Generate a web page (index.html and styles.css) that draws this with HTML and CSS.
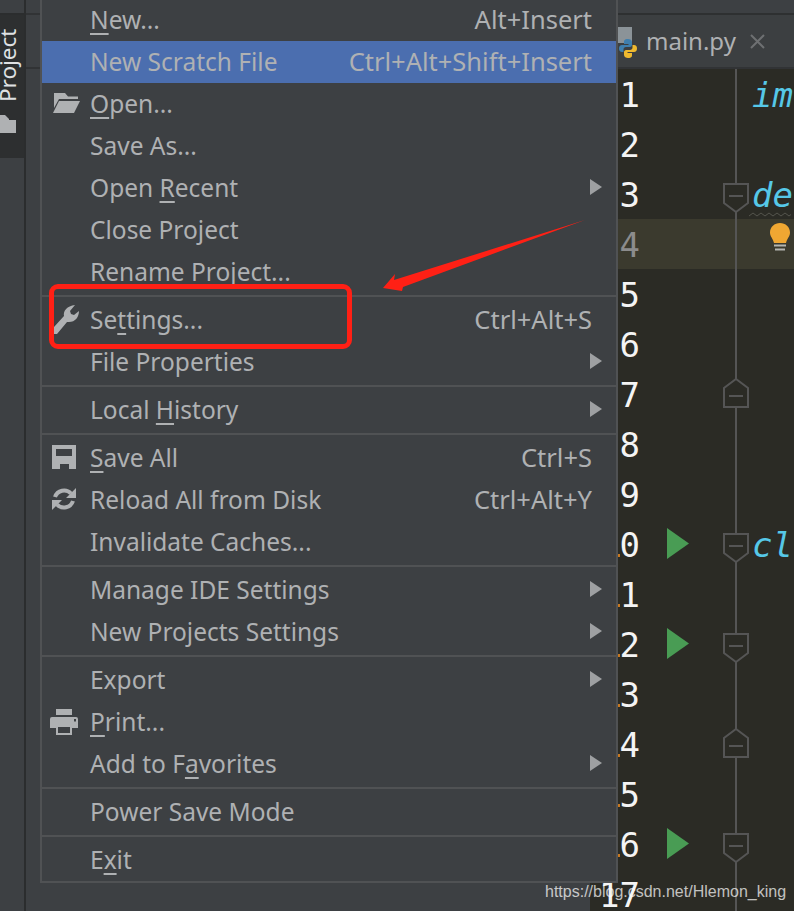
FILE: index.html
```html
<!DOCTYPE html>
<html lang="en">
<head>
<meta charset="utf-8">
<title>File menu</title>
<link rel="stylesheet" href="styles.css">
</head>
<body>
<div class="window">
  <aside class="stripe">
    <div class="stripe-tab">
      <span class="stripe-label">Project</span>
      <svg class="stripe-folder" width="17" height="18" viewBox="0 0 17 18"><path d="M0 0H5L9 4V5H16V18H0Z" fill="#afb1b3"/></svg>
    </div>
  </aside>
  <div class="panel"><div class="panel-head"></div></div>
  <main class="editor">
    <div class="tabbar">
      <div class="tab">
        <svg class="py" width="22" height="31" viewBox="0 0 22 31">
          <rect x="0" y="0" width="15" height="16" fill="#8b9398"/>
          <g transform="translate(2 12)">
            <path d="M9 0C5 0 5 2 5 3V5H9.5V6H3C1 6 0 7.5 0 9.5C0 11.5 1 13 3 13H4.5V10.5C4.5 9 5.5 8 7 8H11C12 8 13 7 13 6V3C13 1 11 0 9 0Z" fill="#3f7fae"/>
            <path d="M9 0C5 0 5 2 5 3V5H9.5V6H3C1 6 0 7.5 0 9.5C0 11.5 1 13 3 13H4.5V10.5C4.5 9 5.5 8 7 8H11C12 8 13 7 13 6V3C13 1 11 0 9 0Z" fill="#eeb92f" transform="rotate(180 9 9.5)"/>
          </g>
        </svg>
        <span class="tab-name">main.py</span>
        <svg class="tab-close" width="15" height="15" viewBox="0 0 15 15"><path d="M1 1L14 14M14 1L1 14" stroke="#6e7072" stroke-width="2"/></svg>
      </div>
    </div>
    <div class="code">
      <div class="line"><span class="num">1</span><span class="run"></span><span class="fold"></span><span class="txt">im</span></div>
      <div class="line"><span class="num">2</span><span class="run"></span><span class="fold"></span><span class="txt"></span></div>
      <div class="line"><span class="num">3</span><span class="run"></span><span class="fold"><svg class="mark-down" width="26" height="30" viewBox="0 0 26 30"><path d="M1 1H25V20L13 29L1 20Z" fill="#2b2b25" stroke="#555" stroke-width="2"/><path d="M6 13H20" stroke="#555" stroke-width="2"/></svg></span><span class="txt">de<svg class="squiggle" width="42" height="5" viewBox="0 0 42 5"><path d="M0 4L4 1L8 4L12 1L16 4L20 1L24 4L28 1L32 4L36 1L40 4L44 1" fill="none" stroke="#55554d" stroke-width="1"/></svg></span></div>
      <div class="line current"><span class="num">4</span><span class="run"></span><span class="fold"></span><span class="txt"><svg class="bulb" width="20" height="28" viewBox="0 0 20 28"><path d="M10 0C4.500 0 0 4 0 9.500C0 13.500 3 15.500 4 20H16C17 15.500 20 13.500 20 9.500C20 4 15.500 0 10 0Z" fill="#f0a732"/><path d="M4 22.500H16" stroke="#b5b5b0" stroke-width="2"/><path d="M5 26.500H15" stroke="#b5b5b0" stroke-width="2"/></svg></span></div>
      <div class="line"><span class="num">5</span><span class="run"></span><span class="fold"></span><span class="txt"></span></div>
      <div class="line"><span class="num">6</span><span class="run"></span><span class="fold"></span><span class="txt"></span></div>
      <div class="line"><span class="num">7</span><span class="run"></span><span class="fold"><svg class="mark-up" width="26" height="30" viewBox="0 0 26 30"><path d="M1 29H25V10L13 1L1 10Z" fill="#2b2b25" stroke="#555" stroke-width="2"/><path d="M6 18H20" stroke="#555" stroke-width="2"/></svg></span><span class="txt"></span></div>
      <div class="line"><span class="num">8</span><span class="run"></span><span class="fold"></span><span class="txt"></span></div>
      <div class="line"><span class="num">9</span><span class="run"></span><span class="fold"></span><span class="txt"></span></div>
      <div class="line tick"><span class="num">10</span><span class="run"><svg class="play" width="22" height="31" viewBox="0 0 22 31"><path d="M0 0L22 15.500L0 31Z" fill="#499c54"/></svg></span><span class="fold"><svg class="mark-down" width="26" height="30" viewBox="0 0 26 30"><path d="M1 1H25V20L13 29L1 20Z" fill="#2b2b25" stroke="#555" stroke-width="2"/><path d="M6 13H20" stroke="#555" stroke-width="2"/></svg></span><span class="txt">cl</span></div>
      <div class="line tick"><span class="num">11</span><span class="run"></span><span class="fold"></span><span class="txt"></span></div>
      <div class="line tick"><span class="num">12</span><span class="run"><svg class="play" width="22" height="31" viewBox="0 0 22 31"><path d="M0 0L22 15.500L0 31Z" fill="#499c54"/></svg></span><span class="fold"><svg class="mark-down" width="26" height="30" viewBox="0 0 26 30"><path d="M1 1H25V20L13 29L1 20Z" fill="#2b2b25" stroke="#555" stroke-width="2"/><path d="M6 13H20" stroke="#555" stroke-width="2"/></svg></span><span class="txt"></span></div>
      <div class="line tick"><span class="num">13</span><span class="run"></span><span class="fold"></span><span class="txt"></span></div>
      <div class="line tick"><span class="num">14</span><span class="run"></span><span class="fold"><svg class="mark-up" width="26" height="30" viewBox="0 0 26 30"><path d="M1 29H25V10L13 1L1 10Z" fill="#2b2b25" stroke="#555" stroke-width="2"/><path d="M6 18H20" stroke="#555" stroke-width="2"/></svg></span><span class="txt"></span></div>
      <div class="line tick"><span class="num">15</span><span class="run"></span><span class="fold"></span><span class="txt"></span></div>
      <div class="line tick"><span class="num">16</span><span class="run"><svg class="play" width="22" height="31" viewBox="0 0 22 31"><path d="M0 0L22 15.500L0 31Z" fill="#499c54"/></svg></span><span class="fold"><svg class="mark-down" width="26" height="30" viewBox="0 0 26 30"><path d="M1 1H25V20L13 29L1 20Z" fill="#2b2b25" stroke="#555" stroke-width="2"/><path d="M6 13H20" stroke="#555" stroke-width="2"/></svg></span><span class="txt"></span></div>
      <div class="line"><span class="num">17</span><span class="run"></span><span class="fold"></span><span class="txt"></span></div>
    </div>
  </main>

  <nav class="menu">
    <div class="item"><span class="ico"></span><span class="label"><u>N</u>ew...</span><span class="sc">Alt+Insert</span></div>
    <div class="item active"><span class="ico"></span><span class="label">New Scratch File</span><span class="sc">Ctrl+Alt+Shift+Insert</span></div>
    <div class="item"><span class="ico"><svg width="28" height="20" viewBox="0 0 28 20"><path d="M2 0H13L16 3.500H26V6H7L2 15Z" fill="#afb1b3"/><path d="M7 8H28L22 20H1Z" fill="#afb1b3"/></svg></span><span class="label"><u>O</u>pen...</span></div>
    <div class="item"><span class="ico"></span><span class="label">Save As...</span></div>
    <div class="item"><span class="ico"></span><span class="label">Open <u>R</u>ecent</span><i class="arrow"></i></div>
    <div class="item"><span class="ico"></span><span class="label">Close Project</span></div>
    <div class="item"><span class="ico"></span><span class="label">Rename Project...</span></div>
    <hr class="sep">
    <div class="item"><span class="ico"><svg class="ico-wrench" width="25" height="30" viewBox="0 0 25 30"><path d="M0 29L0 22L10 11C9 6 13 1 21 0L16 6L17 9L20 10L25 6C25 12 21 18 13 17L3 29Z" fill="#afb1b3"/></svg></span><span class="label">Se<u>t</u>tings...</span><span class="sc">Ctrl+Alt+S</span></div>
    <div class="item"><span class="ico"></span><span class="label">File Properties</span><i class="arrow"></i></div>
    <hr class="sep">
    <div class="item"><span class="ico"></span><span class="label">Local <u>H</u>istory</span><i class="arrow"></i></div>
    <hr class="sep">
    <div class="item"><span class="ico"><svg width="24" height="24" viewBox="0 0 24 24"><path fill-rule="evenodd" d="M0 0H24V24H0ZM4 4V11H20V4ZM8 19V24H17V19Z" fill="#afb1b3"/></svg></span><span class="label"><u>S</u>ave All</span><span class="sc">Ctrl+S</span></div>
    <div class="item"><span class="ico"><svg width="24" height="24" viewBox="0 0 24 24"><path d="M3 10A9.500 9.500 0 0 1 19 6.500M21 14A9.500 9.500 0 0 1 5 17.500" fill="none" stroke="#afb1b3" stroke-width="4"/><path d="M24 1V11H14ZM0 23V13H10Z" fill="#afb1b3"/></svg></span><span class="label">Reload All from Disk</span><span class="sc">Ctrl+Alt+Y</span></div>
    <div class="item"><span class="ico"></span><span class="label">Invalidate Caches...</span></div>
    <hr class="sep">
    <div class="item"><span class="ico"></span><span class="label">Manage IDE Settings</span><i class="arrow"></i></div>
    <div class="item"><span class="ico"></span><span class="label">New Projects Settings</span><i class="arrow"></i></div>
    <hr class="sep">
    <div class="item"><span class="ico"></span><span class="label">Export</span><i class="arrow"></i></div>
    <div class="item"><span class="ico"><svg class="ico-print" width="28" height="26" viewBox="0 0 28 26"><path fill-rule="evenodd" d="M6 0H22V6H6ZM2 8H26A2 2 0 0 1 28 10V19H22V26H6V19H0V10A2 2 0 0 1 2 8ZM8 18V24H20V18ZM24 10V12.500H26V10Z" fill="#afb1b3"/></svg></span><span class="label"><u>P</u>rint...</span></div>
    <div class="item"><span class="ico"></span><span class="label">Add to F<u>a</u>vorites</span><i class="arrow"></i></div>
    <hr class="sep">
    <div class="item"><span class="ico"></span><span class="label">Power Save Mode</span></div>
    <hr class="sep">
    <div class="item"><span class="ico"></span><span class="label">E<u>x</u>it</span></div>
  </nav>

  <div class="callout-box"></div>
  <svg class="callout-arrow" width="210" height="80" viewBox="0 0 210 80"><path d="M205 0L23 67L22 71L3 68L15 54L14 60Z" fill="#ff2015"/></svg>
  <div class="watermark">https://blog.csdn.net/Hlemon_king</div>
</div>
</body>
</html>
```

FILE: styles.css
```css
* { box-sizing: border-box; }
html, body { margin: 0; padding: 0; }
body { background: #3c3f41; }

.window {
  position: relative;
  display: flex;
  width: 794px;
  height: 911px;
  overflow: hidden;
  background: #3d4043;
  font-family: "Noto Sans", "Open Sans", sans-serif;
}

/* left tool-window stripe */
.stripe { width: 24px; flex: none; padding-top: 13px; }
.stripe-tab {
  height: 145px;
  background: #2d2f30;
  border-top: 2px solid #2b2d2e;
  display: flex;
  flex-direction: column;
  padding-top: 15px;
  overflow: hidden;
}
.stripe-label {
  writing-mode: vertical-rl;
  transform: rotate(180deg);
  font-size: 22.500px;
  line-height: 24px;
  height: 72px;
  width: 24px;
  color: #dfe1e3;
  margin-left: -4px;
  white-space: nowrap;
}
.stripe-folder { margin-top: 13px; flex: none; }

.panel {
  width: 566px;
  flex: none;
  border-left: 2px solid #2b2d2e;
  padding-top: 13px;
}
.panel-head {
  height: 56px;
  border-top: 2px solid #313335;
  border-bottom: 2px solid #313335;
}

/* editor */
.editor { flex: 1; min-width: 0; display: flex; flex-direction: column; }
.tabbar {
  margin-top: 13px;
  height: 56px;
  flex: none;
  border-top: 2px solid #2e3031;
  border-bottom: 2px solid #313335;
  background: #3c3f41;
  padding-left: 27px;
}
.tab { display: flex; align-items: flex-start; height: 52px; padding-top: 12px; }
.py { flex: none; }
.tab-name {
  margin-left: 7px;
  font-size: 24px;
  line-height: 28px;
  color: #afb1b3;
}
.tab-close { margin-left: 14px; margin-top: 7px; flex: none; }

.code { background: #2b2b25; flex: 1; overflow: hidden; }
.line {
  position: relative;
  display: grid;
  grid-template-columns: 50px 83px 26px 1fr;
  grid-template-rows: 50px;
  height: 50px;
  font-family: "DejaVu Sans Mono", monospace;
  font-size: 34px;
  line-height: 52px;
}
.line.current { background: #3b3a2e; }
.num { text-align: right; color: #f4f4f4; white-space: nowrap; }
.line.current .num { color: #8c8c8c; }
.run { padding: 9px 0 0 27px; }
.play { display: block; }
.fold {
  background: linear-gradient(#555, #555) no-repeat 12px 0 / 2px 100%;
}
.fold svg { display: block; }
.mark-down { margin-top: 14px; }
.mark-up { margin-top: 9px; }
.txt {
  position: relative;
  padding-left: 3px;
  font-style: italic;
  color: #56c8e8;
  white-space: nowrap;
  overflow: hidden;
}
.squiggle { position: absolute; left: 0; bottom: 2px; }
.bulb { display: block; margin: 4px 0 0 18px; }
.tick::before {
  content: "";
  position: absolute;
  left: 28px;
  top: 35px;
  width: 2px;
  height: 3px;
  background: #c9791f;
}

/* popup menu */
.menu {
  position: absolute;
  left: 40px;
  top: -1px;
  width: 578px;
  height: 884px;
  background: #3d4043;
  border: 2px solid #505254;
  border-top: 0;
  color: #afb1b3;
  font-size: 24.500px;
}
.item {
  display: flex;
  align-items: center;
  height: 42px;
  padding: 0 14px 0 0;
  white-space: nowrap;
}
.item.active { background: #4b6eaf; }
.ico {
  width: 48px;
  flex: none;
  height: 40px;
  align-self: flex-start;
  display: flex;
  align-items: center;
  padding-left: 10px;
}
.ico-wrench { margin: 2px 0 0 2px; }
.ico-print { margin: 2px 0 0 -2px; }
.label { flex: 1; line-height: 41px; height: 41px; align-self: flex-start; }
.label u { text-decoration-thickness: 2px; text-underline-offset: 4px; }
.sc { padding-right: 10px; font-size: 25.500px; line-height: 41px; height: 41px; align-self: flex-start; }
.arrow {
  width: 0;
  height: 0;
  margin-bottom: 2px;
  border-left: 12px solid #9ea0a2;
  border-top: 8px solid transparent;
  border-bottom: 8px solid transparent;
}
.sep {
  height: 2px;
  margin: 2px 0;
  border: 0;
  background: #505254;
}

/* annotation overlays */
.callout-box {
  position: absolute;
  left: 49px;
  top: 284px;
  width: 303px;
  height: 65px;
  border: 5px solid #ff2015;
  border-radius: 9px;
}
.callout-arrow { position: absolute; left: 380px; top: 220px; }
.watermark {
  position: absolute;
  left: 545px;
  top: 882px;
  font-family: "Liberation Sans", Arial, sans-serif;
  font-size: 16px;
  line-height: 20px;
  color: rgba(255, 255, 255, 0.72);
  white-space: nowrap;
}
```
